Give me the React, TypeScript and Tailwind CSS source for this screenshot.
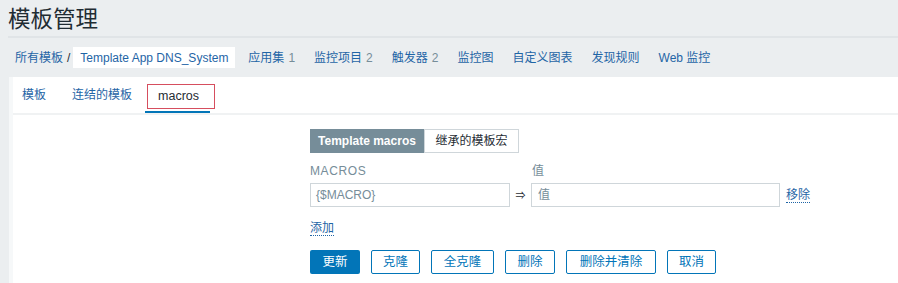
import React from "react";

const font = { fontFamily: '"Liberation Sans", Arial, "Noto Sans CJK SC", sans-serif' };

export default function App() {
  const nav: [string, string?][] = [
    ["应用集", "1"],
    ["监控项目", "2"],
    ["触发器", "2"],
    ["监控图"],
    ["自定义图表"],
    ["发现规则"],
    ["Web 监控"],
  ];
  const btns: [string, string][] = [
    ["克隆", "w-[49px]"],
    ["全克隆", "w-[63px]"],
    ["删除", "w-[50px]"],
    ["删除并清除", "w-[90px]"],
    ["取消", "w-[49px]"],
  ];
  return (
    <div style={font} className="w-[898px] h-[283px] bg-[#ebeef0] text-[#1f2c33] text-[12px] overflow-hidden">
      <div className="h-[36px] pl-[8px] pt-[6px] text-[22.5px] leading-[28px] text-[#1f2c33]">模板管理</div>
      <div className="h-[2px] ml-[8px] bg-[#e0e4e7]" />
      <div className="h-[39px] pl-[15px] flex items-center">
        <span className="text-[#1f65a6]">所有模板</span>
        <span className="ml-[4px] mr-[3px] text-[#1f2c33]">/</span>
        <span className="bg-white h-[21px] w-[162px] flex items-center justify-center text-[#1f65a6]">Template App DNS_System</span>
        <div className="flex ml-[13px] gap-[19px]">
          {nav.map(([t, n]) => (
            <span key={t} className="text-[#1f65a6]">
              {t}
              {n && <span className="text-[#768d99] ml-[4px]">{n}</span>}
            </span>
          ))}
        </div>
      </div>
      <div className="ml-[9px] bg-white h-[206px] border-l-[4px] border-[#f6f8f9]">
        <div className="h-[38px] flex items-end pl-[4px] border-b-[2px] border-[#f0f2f3]">
          <div className="h-[36px] px-[5px] flex items-center text-[#1f65a6] pb-[1px]">模板</div>
          <div className="h-[36px] ml-[16px] px-[5px] flex items-center text-[#1f65a6] pb-[1px]">连结的模板</div>
          <div className="h-[36px] ml-[8px] w-[65px] flex flex-col items-start">
            <div className="mt-[7px] ml-[2px] w-[68px] h-[25px] shrink-0 border border-[#d64e5e] flex items-center pl-[10px] text-[#1f2c33] text-[12.5px]">macros</div>
            <div className="mt-[2px] w-[65px] h-[3px] bg-[#0275b8]" />
          </div>
        </div>
        <div className="pl-[297px] pt-[14px]">
          <div className="flex h-[24px]">
            <div className="w-[114px] bg-[#768d99] text-white flex items-center justify-center font-bold">Template macros</div>
            <div className="w-[95px] border border-[#cfd6da] flex items-center justify-center text-[#1f2c33]">继承的模板宏</div>
          </div>
          <div className="flex mt-[11px] h-[14px] items-center text-[#768d99]">
            <span className="w-[222px] tracking-[0.6px]">MACROS</span>
            <span>值</span>
          </div>
          <div className="flex items-center mt-[5px] h-[24px]">
            <div className="w-[200px] h-[24px] border border-[#cfd6da] flex items-center pl-[5px] text-[#768d99]">{"{$MACRO}"}</div>
            <span className="w-[21px] text-center text-[10px] text-[#1f2c33]">⇒</span>
            <div className="w-[249px] h-[24px] border border-[#cfd6da] flex items-center pl-[6px] text-[#768d99]">值</div>
            <span className="ml-[6px] text-[#1f65a6] border-b border-dotted border-[#1f65a6] leading-[14px]">移除</span>
          </div>
          <div className="mt-[12px]">
            <span className="text-[#1f65a6] border-b border-dotted border-[#1f65a6] leading-[14px]">添加</span>
          </div>
          <div className="flex mt-[13px] gap-[11px]">
            <button className="w-[50px] h-[24px] rounded-[2px] bg-[#0275b8] text-white text-[12.5px]">更新</button>
            {btns.map(([b, w]) => (
              <button
                key={b}
                className={`${w} h-[24px] rounded-[2px] border border-[#0275b8] text-[#0275b8] bg-white text-[12.5px]`}
              >
                {b}
              </button>
            ))}
          </div>
        </div>
      </div>
    </div>
  );
}
